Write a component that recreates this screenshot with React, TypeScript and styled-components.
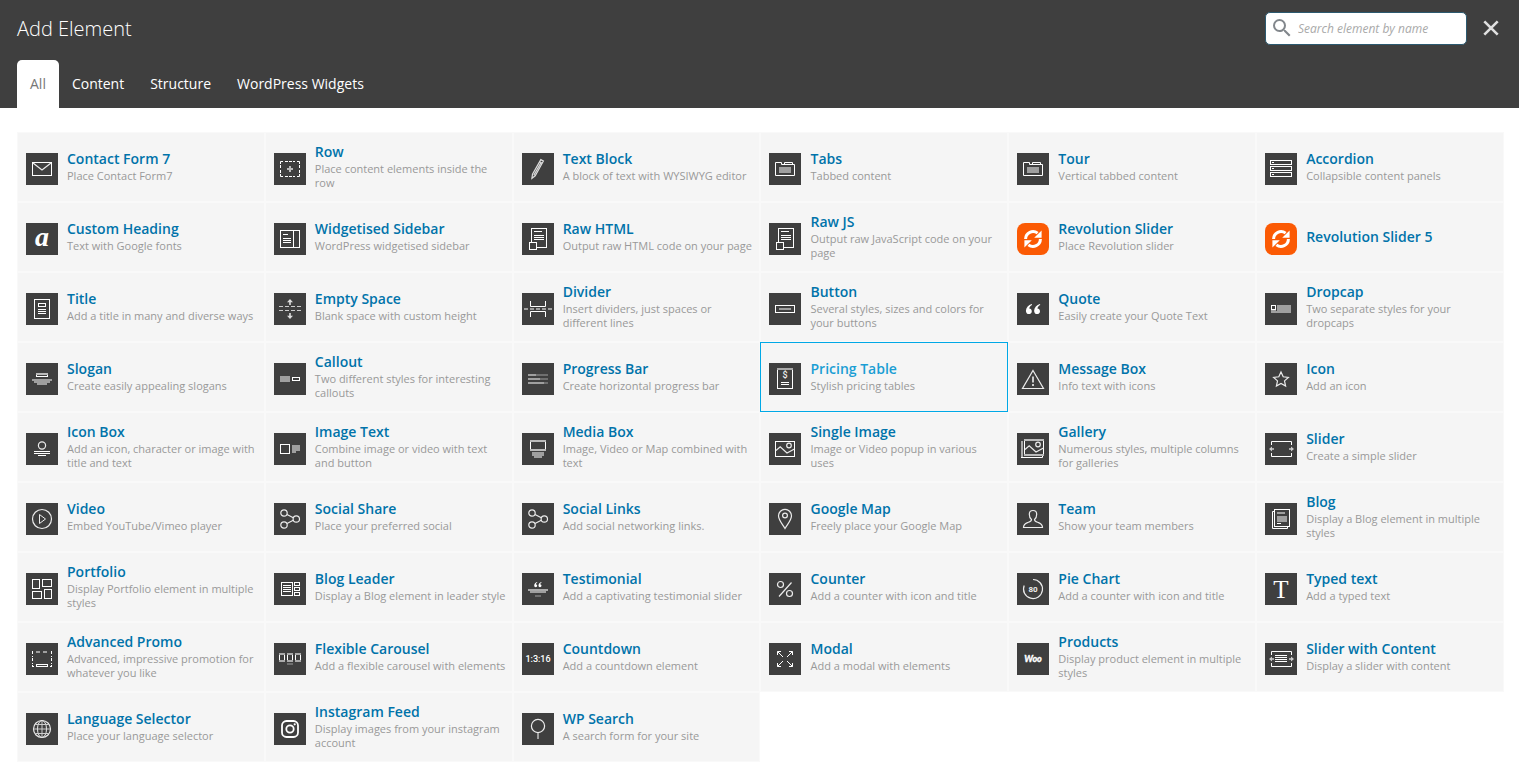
import React, { useState } from 'react';
import type { ReactNode } from 'react';
import styled, { createGlobalStyle, css } from 'styled-components';
import { MdSearch } from 'react-icons/md';

const GlobalStyle = createGlobalStyle`
  *, *::before, *::after { box-sizing: border-box; }
  body {
    margin: 0;
    background: #fff;
    font-family: 'Open Sans', 'Noto Sans', sans-serif;
  }
`;

const Header = styled.header`
  display: flex;
  flex-direction: column;
  background: #3f3f3f;
  color: #fff;
`;

const TitleBar = styled.div`
  display: flex;
  align-items: center;
  height: 56px;
  margin-bottom: 4px;
  padding: 0 15px 0 17px;
`;

const Heading = styled.h1`
  flex: 1;
  margin: 0;
  padding-top: 2px;
  font-size: 20px;
  font-weight: 300;
  line-height: 28px;
`;

const SearchBox = styled.label`
  display: flex;
  align-items: center;
  width: 202px;
  height: 33px;
  margin-right: 11px;
  padding: 0 4px;
  background: #fff;
  border: 1px solid #2c5a70;
  border-radius: 5px;
  color: #82878c;
`;

const SearchInput = styled.input`
  flex: 1;
  min-width: 0;
  margin: 0;
  padding: 2px 4px 0;
  border: 0;
  outline: 0;
  background: none;
  color: #555;
  font: italic 12px/20px 'Open Sans', sans-serif;
  &::placeholder {
    color: #a9a9a9;
    opacity: 1;
  }
`;

const CloseButton = styled.button`
  display: flex;
  margin: 0;
  padding: 0;
  border: 0;
  background: none;
  color: #e0e0e0;
  cursor: pointer;
`;

const TabList = styled.div`
  display: flex;
  height: 48px;
  padding: 0 17px;
`;

const Tab = styled.button<{ $active: boolean }>`
  padding: 0 13px;
  border: 0;
  border-radius: 5px 5px 0 0;
  background: ${p => (p.$active ? '#fff' : 'transparent')};
  color: ${p => (p.$active ? '#777' : '#fff')};
  font: 14px/20px 'Open Sans', sans-serif;
  cursor: pointer;
`;

const Grid = styled.ul`
  display: grid;
  grid-template-columns: repeat(6, minmax(0, 1fr));
  grid-auto-rows: minmax(70px, auto);
  margin: 0;
  padding: 24px 15px 17px 17px;
  list-style: none;
`;

const Name = styled.span`
  display: block;
  color: #0073aa;
  font-size: 14px;
  font-weight: 600;
  line-height: 16px;
`;

const Card = styled.a<{ $active: boolean }>`
  display: flex;
  align-items: center;
  gap: 9px;
  height: 100%;
  padding: 4px 5px 0 8px;
  border: 1px solid #f9f9f9;
  background: #f5f5f5;
  text-decoration: none;
  ${p =>
    p.$active &&
    css`
      border-color: #00a8e6;
      ${Name} { color: #1a9ed4; }
    `}
`;

const CardText = styled.span`
  flex: 1;
  min-width: 0;
  padding-bottom: 4px;
`;

const Description = styled.span`
  display: block;
  margin-top: 2px;
  color: #999;
  font-size: 11px;
  line-height: 14px;
`;

const IconTile = styled.svg`
  flex: none;
  display: block;
  width: 32px;
  height: 32px;
  overflow: visible;
`;

const W = '#fff';
const G = '#9f9f9f';
const D = '#6f6f6f';
const BG = '#3f3f3f';

type BoxProps = { x: number; y: number; w: number; h: number; fill?: string; color?: string };

/* One-pixel outline whose outer edge is x, y, w, h. */
const Outline = ({ x, y, w, h, fill = 'none', color = W }: BoxProps) => (
  <rect x={x + 0.5} y={y + 0.5} width={w - 1} height={h - 1} fill={fill} stroke={color} />
);
const Fill = ({ x, y, w, h, color = G }: BoxProps) => (
  <rect x={x} y={y} width={w} height={h} fill={color} />
);
const Line = ({ d, color = '#ececec', width = 1, dash }: { d: string; color?: string; width?: number; dash?: string }) => (
  <path d={d} fill="none" stroke={color} strokeWidth={width} strokeDasharray={dash} />
);
const Dot = ({ x, y, r }: { x: number; y: number; r: number }) => (
  <circle cx={x} cy={y} r={r} fill="none" stroke="#ececec" strokeWidth="1.2" />
);

const QUOTE = 'M6.2 0.2C3 1.2 0.6 3.6 0.4 7c0 2 1.2 3.4 3 3.4 1.700 0 2.900-1.200 2.900-2.900 0-1.600-1.100-2.700-2.600-2.800 .2-1.600 1.300-2.800 2.900-3.500z';

const slider = (
  <>
    <Line color={W} d="M6.500 12V8.500H26.500V12M6.500 20V23.500H26.500V20" />
    <path d="M4 16l3-2.500v1.700h2v1.600H7v1.700zM29 16l-3-2.500v1.700h-2v1.600h2v1.700z" fill="#ccc" />
  </>
);

const tabs = (
  <>
    <Line color={W} d="M6.500 9.500H12.500V11.500H25.500V22.500H6.500z" />
    <Line color={W} d="M15.500 11V9.500H23.500V11" />
    <Fill x={10} y={14} w={12} h={6} />
  </>
);

const raw = (
  <>
    <Outline x={9} y={5} w={16} h={20} />
    <Line color={W} d="M12 8.500H20M12 12.500H22M12 14.500H22M12 16.500H22" />
    <Outline x={7} y={19} w={8} h={8} fill={BG} />
  </>
);

const share = (
  <>
    <Line d="M13 11.500L19.300 14.800M13 20.500L19.300 17.200" width={1.2} />
    <Dot x={10} y={10} r={3.2} />
    <Dot x={10} y={22} r={3.2} />
    <Dot x={22.3} y={16} r={3.2} />
  </>
);

const icons: Record<string, ReactNode> = {
  mail: (
    <>
      <Outline x={6} y={9} w={20} h={14} />
      <Line d="M7 10L16 17L25 10" width={1.2} />
    </>
  ),
  row: (
    <>
      <Line color={W} d="M6.500 11V8.500H9M6.500 21V23.500H9M25.500 11V8.500H23M25.500 21V23.500H23" />
      <Line color={W} d="M11 8.500H21M11 23.500H21" dash="3 1" />
      <Line color={W} d="M6.500 12V20M25.500 12V20" dash="3 2" />
      <Line color="#bbb" width={2} d="M16 13V19M13 16H19" />
    </>
  ),
  pencil: (
    <Line width={1.2} color="#ddd" d="M18.800 6.600L21.400 8L13.200 22.800L9.900 25.300L10.500 21.300zM17.600 8.800L20.200 10.200M18.900 9.700L11.800 22.200" />
  ),
  tabs,
  accordion: (
    <>
      {[7, 13, 19].map(y => (
        <g key={y}>
          <Outline x={5} y={y} w={22} h={5} />
          <Fill x={7} y={y + 2} w={2} h={1} color={W} />
        </g>
      ))}
    </>
  ),
  heading: (
    <text x="16" y="23" textAnchor="middle" fill={W} fontFamily="Liberation Serif" fontSize="28" fontWeight="700" fontStyle="italic">a</text>
  ),
  sidebar: (
    <>
      <Outline x={6} y={7} w={20} h={18} />
      <Line color={W} d="M19.500 7V25M9 11.500H14M9 15.500H17M9 17.500H17M9 19.500H17" />
    </>
  ),
  raw,
  revolution: (
    <>
      <rect width="32" height="32" rx="8" fill="#fb5a04" />
      <path d="M8.600 16A7.400 7.400 0 0 1 20.600 10.200M23.400 16A7.400 7.400 0 0 1 11.400 21.800" fill="none" stroke={W} strokeWidth="3" />
      <path d="M24.600 7.400v7.400h-7.400zM7.400 24.600v-7.400h7.400z" fill={W} />
    </>
  ),
  title: (
    <>
      <Outline x={8} y={6} w={16} h={20} />
      <Outline x={12} y={10} w={8} h={4} />
      <Line color={W} d="M12 16.500H20M12 18.500H20M12 20.500H20" />
    </>
  ),
  space: (
    <>
      <path d="M16 6l3 3.200h-2.200V12h-1.600V9.200H13zM16 26l3-3.200h-2.200V20h-1.600v2.800H13z" fill="#ddd" />
      <Line color="#ccc" d="M5 13.500H27M5 17.500H27" dash="4 2" />
    </>
  ),
  divider: (
    <>
      <Line color={W} d="M8.500 8V13.500H23.500V8M8.500 24V18.500H23.500V24" />
      <Line color={G} width={2} d="M2 16H30" dash="4 2" />
    </>
  ),
  button: (
    <>
      <Outline x={6} y={12} w={20} h={8} />
      <Fill x={10} y={15} w={12} h={2} />
    </>
  ),
  quote: (
    <g fill={W}>
      <path d={QUOTE} transform="translate(8.500 10.700)" />
      <path d={QUOTE} transform="translate(16.700 10.700)" />
    </g>
  ),
  dropcap: (
    <>
      <Fill x={6} y={12} w={20} h={8} />
      <Fill x={11} y={12} w={1} h={6} color={BG} />
      <Outline x={6} y={12} w={5} h={5} fill={BG} />
    </>
  ),
  slogan: (
    <>
      <Outline x={10} y={10} w={12} h={4} />
      <Fill x={10} y={10} w={12} h={2} color="#bbb" />
      <Fill x={6} y={16} w={20} h={2} />
      <Fill x={8} y={18} w={16} h={2} />
      <Fill x={11} y={20} w={10} h={2} />
    </>
  ),
  callout: (
    <>
      <Fill x={6} y={13} w={10} h={6} />
      <Outline x={18} y={14} w={8} h={4} />
    </>
  ),
  progress: (
    <>
      {[8, 12, 16].map((w, i) => (
        <g key={w}>
          <Fill x={6} y={11 + i * 4} w={20} h={2} color={D} />
          <Fill x={6} y={11 + i * 4} w={w} h={2} />
        </g>
      ))}
    </>
  ),
  pricing: (
    <>
      <Outline x={8} y={5} w={16} h={21} />
      <Fill x={8} y={5} w={16} h={2} color="#aaa" />
      <text x="16" y="15" textAnchor="middle" fill="#eee" fontFamily="Roboto" fontSize="9" fontWeight="500">$</text>
      <Line color={W} d="M12 19.500H20M12 21.500H20" />
    </>
  ),
  warning: (
    <>
      <Line d="M16 7.500L26.500 25.500H5.500z" width={1.2} />
      <Line d="M16 13.500V19.500M16 21V23" width={2} color="#ccc" />
    </>
  ),
  star: (
    <Line width={1.2} d="M16 9l2.200 4.800 5.200.6-3.900 3.500 1.100 5.200-4.600-2.600-4.600 2.600 1.100-5.200-3.900-3.500 5.200-.6z" />
  ),
  iconbox: (
    <>
      <Dot x={16} y={12.5} r={3.6} />
      <Line color={W} d="M8 18.500H24M8 20.500H24M12 22.500H20" />
    </>
  ),
  imagetext: (
    <>
      <Outline x={6} y={11} w={10} h={10} />
      <Fill x={18} y={12} w={8} h={6} />
      <Fill x={18} y={18} w={4} h={2} />
    </>
  ),
  media: (
    <>
      <Outline x={8} y={7} w={16} h={11} />
      <Fill x={8} y={7} w={16} h={2} color="#bbb" />
      <Fill x={8} y={16} w={16} h={2} color="#bbb" />
      <Fill x={10} y={19} w={12} h={4} />
      <Fill x={12} y={23} w={8} h={2} />
    </>
  ),
  image: (
    <>
      <Outline x={6} y={8} w={20} h={16} />
      <Dot x={20} y={12.5} r={2.3} />
      <Line d="M7 17.500L11.200 13.800L18 20L25.500 16" width={1.2} />
    </>
  ),
  gallery: (
    <>
      <Outline x={7} y={6} w={20} h={17} />
      <Fill x={7} y={6} w={20} h={2} color="#bbb" />
      <Fill x={7} y={21} w={20} h={2} color="#bbb" />
      <Fill x={4} y={8} w={2} h={16} color="#aaa" />
      <Line color={W} d="M4 24.500H25.500V23" />
      <Dot x={21} y={11.500} r={2.3} />
      <Line d="M8 16.500L12.200 12.800L19 19L26.500 15" width={1.2} />
    </>
  ),
  slider,
  video: (
    <>
      <Dot x={16} y={16} r={9.5} />
      <Line d="M13.500 11.500V20.500L19.500 16z" />
    </>
  ),
  share,
  map: (
    <>
      <Line width={1.2} d="M16 25.500C13 20.500 9.500 17 9.500 12.800A6.500 6.500 0 0 1 22.500 12.800C22.500 17 19 20.500 16 25.500z" />
      <Dot x={16} y={12.500} r={2.4} />
    </>
  ),
  team: (
    <Line width={1.2} d="M14.500 16.500C13 15.300 12.300 13.300 12.300 11.200C12.300 8.800 13.800 7.500 16 7.500S19.700 8.800 19.700 11.200C19.700 13.300 19 15.300 17.500 16.500C17.500 18.500 19 18.700 21.500 19.600C24.300 20.600 25.500 22 25.500 24.500H6.500C6.500 22 7.700 20.600 10.500 19.600C13 18.700 14.500 18.500 14.500 16.500z" />
  ),
  blog: (
    <>
      <Line color={W} d="M9 8.500H7.500V25.500H22.500V24" />
      <Outline x={9} y={6} w={16} h={18} />
      <Fill x={12} y={9} w={8} h={2} />
      <Fill x={12} y={13} w={10} h={6} />
      <Fill x={12} y={20} w={4} h={1} color={W} />
    </>
  ),
  portfolio: (
    <>
      <Outline x={6} y={6} w={8} h={10} />
      <Outline x={16} y={6} w={10} h={8} />
      <Outline x={6} y={18} w={10} h={8} />
      <Outline x={18} y={16} w={8} h={10} />
    </>
  ),
  leader: (
    <>
      <Outline x={7} y={9} w={12} h={14} />
      <Line color={W} d="M9 12.500H17M9 14.500H17M9 16.500H17M9 18.500H17" />
      <Outline x={20} y={9} w={6} h={4} />
      <Outline x={20} y={14} w={6} h={4} />
      <Outline x={20} y={19} w={6} h={4} />
    </>
  ),
  testimonial: (
    <>
      <g fill={W}>
        <path d={QUOTE} transform="translate(12 9) scale(.5)" />
        <path d={QUOTE} transform="translate(16.300 9) scale(.5)" />
      </g>
      <Fill x={6} y={16} w={20} h={2} color="#aaa" />
      <Fill x={8} y={18} w={16} h={2} />
      <Fill x={13} y={22} w={6} h={2} color={D} />
    </>
  ),
  percent: (
    <>
      <Dot x={11.500} y={11.500} r={3} />
      <Dot x={20.500} y={20.500} r={3} />
      <Line width={1.2} d="M10 23.500L22.500 9.500" />
    </>
  ),
  pie: (
    <>
      <Line d="M16 6.500A9.500 9.500 0 1 1 7.200 12.400" width={1.2} />
      <text x="16" y="19" textAnchor="middle" fill="#eee" fontFamily="Roboto" fontSize="8" fontWeight="700">80</text>
    </>
  ),
  typed: (
    <text x="16" y="25" textAnchor="middle" fill={W} fontFamily="Liberation Serif" fontSize="25">T</text>
  ),
  promo: (
    <>
      <Line color={G} width={2} d="M6 9H7M10 9H14M17 9H21M25 9H26" />
      <Line color={W} d="M6.500 8V24M25.500 8V24" dash="3 2 1 1" />
      <Line color={W} d="M6 23.500H8M24 23.500H26" />
      <Outline x={10} y={21} w={12} h={3} />
    </>
  ),
  carousel: (
    <>
      {[5, 13, 21].map(x => (
        <g key={x}>
          <Outline x={x} y={10} w={6} h={9} />
          <Fill x={x} y={10} w={6} h={2} color="#aaa" />
          <Fill x={x} y={17} w={6} h={2} color="#aaa" />
        </g>
      ))}
      <Fill x={13} y={20} w={6} h={2} color={D} />
    </>
  ),
  countdown: (
    <text x="16" y="19" textAnchor="middle" fill={W} fontFamily="Roboto" fontSize="9" fontWeight="500">1:3:16</text>
  ),
  modal: (
    <Line color={W} d="M8.500 12V8.500H12M8.500 8.500L14 14M20 8.500H23.500V12M23.500 8.500L18 14M8.500 20V23.500H12M8.500 23.500L14 18M20 23.500H23.500V20M23.500 23.500L18 18" />
  ),
  woo: (
    <text x="16" y="19" textAnchor="middle" fill={W} stroke={W} strokeWidth="0.300" fontFamily="Lato" fontSize="9" fontWeight="900" fontStyle="italic">Woo</text>
  ),
  slidercontent: (
    <>
      {slider}
      <Line color={W} d="M10 12.500H22M10 14.500H22M10 16.500H22M10 18.500H22" />
    </>
  ),
  globe: (
    <>
      <Dot x={16} y={16} r={8.5} />
      <ellipse cx="16" cy="16" rx="4.500" ry="8.500" fill="none" stroke="#ececec" />
      <Line d="M16 7.500V24.500M7.500 16H24.500M9.500 11.500H22.500M9.500 20.500H22.500" color="#ccc" />
    </>
  ),
  instagram: (
    <>
      <rect x="8" y="8" width="16" height="16" rx="4.500" fill="none" stroke={W} strokeWidth="1.800" />
      <circle cx="16" cy="16" r="3.700" fill="none" stroke={W} strokeWidth="1.800" />
      <circle cx="20.700" cy="11.300" r="1.100" fill={W} />
    </>
  ),
  search: (
    <>
      <Dot x={16} y={13} r={6.6} />
      <Line width={2} color={G} d="M16 20V26" />
    </>
  ),
};

type Item = [icon: string, name: string, description?: string];

const items: Item[] = [
  ['mail', 'Contact Form 7', 'Place Contact Form7'],
  ['row', 'Row', 'Place content elements inside the row'],
  ['pencil', 'Text Block', 'A block of text with WYSIWYG editor'],
  ['tabs', 'Tabs', 'Tabbed content'],
  ['tabs', 'Tour', 'Vertical tabbed content'],
  ['accordion', 'Accordion', 'Collapsible content panels'],
  ['heading', 'Custom Heading', 'Text with Google fonts'],
  ['sidebar', 'Widgetised Sidebar', 'WordPress widgetised sidebar'],
  ['raw', 'Raw HTML', 'Output raw HTML code on your page'],
  ['raw', 'Raw JS', 'Output raw JavaScript code on your page'],
  ['revolution', 'Revolution Slider', 'Place Revolution slider'],
  ['revolution', 'Revolution Slider 5'],
  ['title', 'Title', 'Add a title in many and diverse ways'],
  ['space', 'Empty Space', 'Blank space with custom height'],
  ['divider', 'Divider', 'Insert dividers, just spaces or different lines'],
  ['button', 'Button', 'Several styles, sizes and colors for your buttons'],
  ['quote', 'Quote', 'Easily create your Quote Text'],
  ['dropcap', 'Dropcap', 'Two separate styles for your dropcaps'],
  ['slogan', 'Slogan', 'Create easily appealing slogans'],
  ['callout', 'Callout', 'Two different styles for interesting callouts'],
  ['progress', 'Progress Bar', 'Create horizontal progress bar'],
  ['pricing', 'Pricing Table', 'Stylish pricing tables'],
  ['warning', 'Message Box', 'Info text with icons'],
  ['star', 'Icon', 'Add an icon'],
  ['iconbox', 'Icon Box', 'Add an icon, character or image with title and text'],
  ['imagetext', 'Image Text', 'Combine image or video with text and button'],
  ['media', 'Media Box', 'Image, Video or Map combined with text'],
  ['image', 'Single Image', 'Image or Video popup in various uses'],
  ['gallery', 'Gallery', 'Numerous styles, multiple columns for galleries'],
  ['slider', 'Slider', 'Create a simple slider'],
  ['video', 'Video', 'Embed YouTube/Vimeo player'],
  ['share', 'Social Share', 'Place your preferred social'],
  ['share', 'Social Links', 'Add social networking links.'],
  ['map', 'Google Map', 'Freely place your Google Map'],
  ['team', 'Team', 'Show your team members'],
  ['blog', 'Blog', 'Display a Blog element in multiple styles'],
  ['portfolio', 'Portfolio', 'Display Portfolio element in multiple styles'],
  ['leader', 'Blog Leader', 'Display a Blog element in leader style'],
  ['testimonial', 'Testimonial', 'Add a captivating testimonial slider'],
  ['percent', 'Counter', 'Add a counter with icon and title'],
  ['pie', 'Pie Chart', 'Add a counter with icon and title'],
  ['typed', 'Typed text', 'Add a typed text'],
  ['promo', 'Advanced Promo', 'Advanced, impressive promotion for whatever you like'],
  ['carousel', 'Flexible Carousel', 'Add a flexible carousel with elements'],
  ['countdown', 'Countdown', 'Add a countdown element'],
  ['modal', 'Modal', 'Add a modal with elements'],
  ['woo', 'Products', 'Display product element in multiple styles'],
  ['slidercontent', 'Slider with Content', 'Display a slider with content'],
  ['globe', 'Language Selector', 'Place your language selector'],
  ['instagram', 'Instagram Feed', 'Display images from your instagram account'],
  ['search', 'WP Search', 'A search form for your site'],
];

const tabNames = ['All', 'Content', 'Structure', 'WordPress Widgets'];

export default function App() {
  const [tab, setTab] = useState('All');
  return (
    <>
      <GlobalStyle />
      <Header>
        <TitleBar>
          <Heading>Add Element</Heading>
          <SearchBox>
            <MdSearch size={24} aria-hidden />
            <SearchInput type="text" aria-label="Search element by name" placeholder="Search element by name" />
          </SearchBox>
          <CloseButton type="button" aria-label="Close">
            <svg width="26" height="26" viewBox="0 0 26 26" aria-hidden>
              <path d="M6.300 6.300L19.700 19.700M19.700 6.300L6.300 19.700" fill="none" stroke="currentColor" strokeWidth="2.600" />
            </svg>
          </CloseButton>
        </TitleBar>
        <TabList role="tablist">
          {tabNames.map(name => (
            <Tab key={name} type="button" role="tab" aria-selected={tab === name} $active={tab === name} onClick={() => setTab(name)}>
              {name}
            </Tab>
          ))}
        </TabList>
      </Header>
      <main>
        <Grid>
          {items.map(([icon, name, description]) => (
            <li key={name}>
              <Card href="#" $active={name === 'Pricing Table'}>
                <IconTile viewBox="0 0 32 32" aria-hidden>
                  {icon !== 'revolution' && <rect width="32" height="32" fill={BG} />}
                  {icons[icon]}
                </IconTile>
                <CardText>
                  <Name>{name}</Name>
                  {description && <Description>{description}</Description>}
                </CardText>
              </Card>
            </li>
          ))}
        </Grid>
      </main>
    </>
  );
}
